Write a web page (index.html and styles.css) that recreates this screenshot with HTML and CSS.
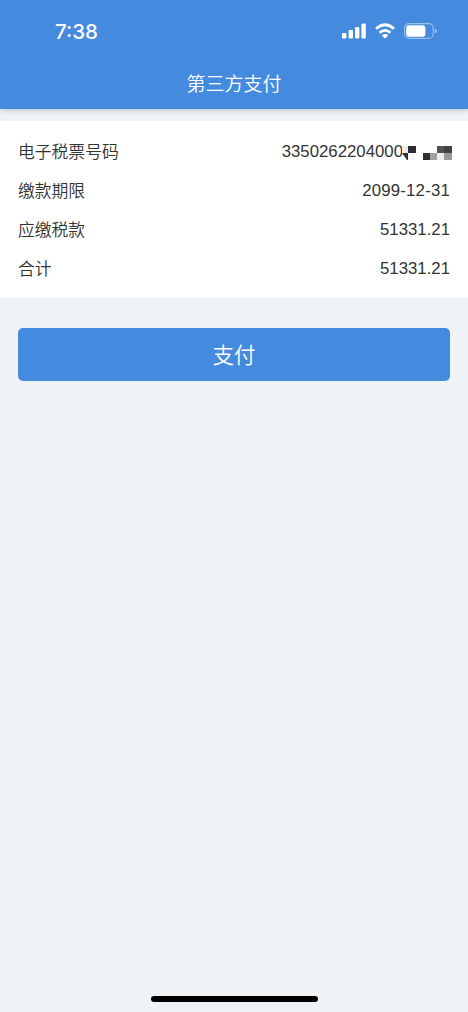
FILE: index.html
```html
<!DOCTYPE html>
<html lang="zh-CN">
<head>
<meta charset="utf-8">
<meta name="viewport" content="width=device-width, initial-scale=1">
<title>第三方支付</title>
<link rel="stylesheet" href="styles.css">
</head>
<body>
<div class="screen">
  <header class="header">
    <div class="status">
      <span class="time">7:38</span>
      <div class="indicators">
        <svg class="signal" width="24" height="16" viewBox="0 0 24 16" fill="#fff">
          <rect x="0" y="10" width="4.4" height="5.6" rx="1.3"/>
          <rect x="6.6" y="7" width="4.4" height="8.6" rx="1.3"/>
          <rect x="13" y="4" width="4.4" height="11.6" rx="1.3"/>
          <rect x="19.4" y="0.6" width="4.4" height="15" rx="1.3"/>
        </svg>
        <svg class="wifi" width="20" height="16" viewBox="0 0 20 16" fill="none" stroke="#fff" stroke-width="2.7">
          <path d="M1 5.8Q10 -2.3 19 5.8"/>
          <path d="M4.5 9.8Q10 4.9 15.5 9.8"/>
          <path d="M10 15.6L6.8 12.4Q10 9.7 13.2 12.4Z" fill="#fff" stroke="none"/>
        </svg>
        <svg class="battery" width="34" height="16" viewBox="0 0 34 16">
          <rect x="0.6" y="0.6" width="28.6" height="14.8" rx="4.5" fill="none" stroke="#fff" stroke-opacity=".45" stroke-width="1.1"/>
          <rect x="2.2" y="2.2" width="19.2" height="11.6" rx="2.7" fill="#fff"/>
          <path d="M30.8 5.5Q32.8 6.2 32.8 8T30.8 10.5Z" fill="#fff" fill-opacity=".5"/>
        </svg>
      </div>
    </div>
    <h1 class="title">第三方支付</h1>
  </header>
  <main class="main">
    <dl class="details">
      <div class="row">
        <dt>电子税票号码</dt>
        <dd class="number">3350262204000<svg class="mask" width="50" height="15" viewBox="0 0 50 15" shape-rendering="crispEdges">
          <rect x="0" y="0" width="6" height="7" fill="#eee"/>
          <rect x="6" y="0" width="8" height="7" fill="#2d2b2e"/>
          <path d="M0 7H6V14H5Z" fill="#333" shape-rendering="auto"/>
          <rect x="6" y="7" width="7" height="7" fill="#f6f6f6"/>
          <rect x="21" y="7" width="7" height="7" fill="#302d31"/>
          <rect x="28" y="7" width="7" height="7" fill="#a19fa1"/>
          <rect x="35" y="0" width="7" height="7" fill="#565358"/>
          <rect x="42" y="0" width="8" height="7" fill="#434145"/>
          <rect x="35" y="7" width="7" height="7" fill="#ececec"/>
          <rect x="42" y="7" width="8" height="7" fill="#99979a"/>
        </svg></dd>
      </div>
      <div class="row"><dt>缴款期限</dt><dd class="date">2099-12-31</dd></div>
      <div class="row"><dt>应缴税款</dt><dd>51331.21</dd></div>
      <div class="row"><dt>合计</dt><dd>51331.21</dd></div>
    </dl>
    <button class="pay" type="button">支付</button>
  </main>
  <div class="home"></div>
</div>
</body>
</html>
```
FILE: styles.css
```css
* {
  box-sizing: border-box;
}

body {
  margin: 0;
  background: #eff3f6;
  color: #333;
  font-family: "Liberation Sans", "Noto Sans CJK SC", sans-serif;
}

.screen {
  display: flex;
  flex-direction: column;
  height: 1012px;
}

.header {
  height: 109px;
  background: #448adf;
  color: #fff;
  box-shadow: 0 1px 5px rgba(0, 0, 0, .22);
}

.status {
  display: flex;
  justify-content: space-between;
  align-items: center;
  height: 62px;
  padding: 0 30px 0 55px;
}

.time {
  padding-top: 2px;
  font: 500 20.5px/24px Inter, sans-serif;
}

.indicators {
  display: flex;
  align-items: center;
}

.wifi {
  margin-left: 9px;
}

.battery {
  margin-left: 9px;
}

.title {
  margin: 0;
  font-family: "Noto Sans CJK SC", sans-serif;
  font-size: 19px;
  font-weight: 350;
  line-height: 42px;
  text-align: center;
}

.main {
  flex: 1;
  padding-top: 12px;
}

.details {
  height: 177px;
  margin: 0;
  padding: 11px 18px;
  background: #fff;
}

.row {
  display: flex;
  justify-content: space-between;
  align-items: center;
  height: 39px;
  font-size: 16.8px;
  line-height: 39px;
}

.row dt {
  padding-top: 2px;
  font-weight: 350;
}

.row dd {
  margin: 0;
}

.number {
  display: flex;
  align-items: center;
}

.row .number {
  margin-right: -2px;
}

.date {
  letter-spacing: .2px;
}

.mask {
  margin-left: -1px;
  margin-top: 3px;
}

.pay {
  display: block;
  width: 432px;
  height: 53px;
  margin: 30px auto 0;
  padding: 3px 0 0;
  border: 0;
  border-radius: 5px;
  background: #448adf;
  color: #fff;
  font: 350 21.5px/50px "Liberation Sans", "Noto Sans CJK SC", sans-serif;
}

.home {
  width: 167px;
  height: 6px;
  margin: 0 auto 10px;
  border-radius: 3px;
  background: #000;
}
```
